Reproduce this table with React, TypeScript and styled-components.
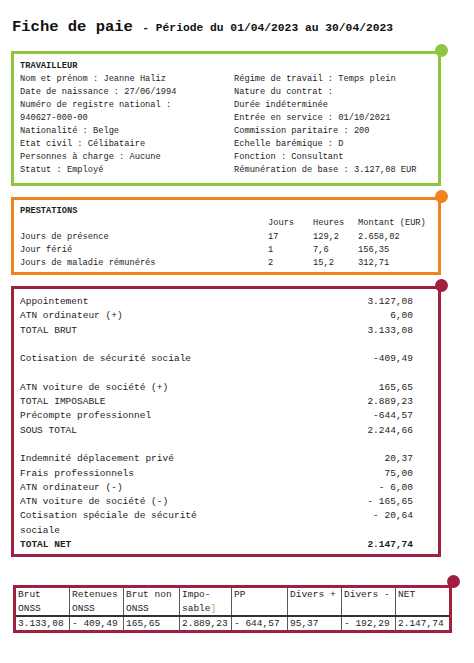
import React from "react";
import styled, { createGlobalStyle } from "styled-components";

const GREEN = "#8cc63f";
const ORANGE = "#f0831f";
const MAROON = "#a1203f";

const GlobalStyle = createGlobalStyle`
	body {
		margin: 0;
		background: #ffffff;
		color: #1d1d1d;
		font-family: "Liberation Mono", "DejaVu Sans Mono", monospace;
	}
`;

const travailleurLeft = [
	"Nom et prénom : Jeanne Haliz",
	"Date de naissance : 27/06/1994",
	"Numéro de registre national :",
	"940627-000-00",
	"Nationalité : Belge",
	"Etat civil : Célibataire",
	"Personnes à charge : Aucune",
	"Statut : Employé",
];

const travailleurRight = [
	"Régime de travail : Temps plein",
	"Nature du contrat :",
	"Durée indéterminée",
	"Entrée en service : 01/10/2021",
	"Commission paritaire : 200",
	"Echelle barémique : D",
	"Fonction : Consultant",
	"Rémunération de base : 3.127,08 EUR",
];

const prestations = [
	["Jours de présence", "17", "129,2", "2.658,02"],
	["Jour férié", "1", "7,6", "156,35"],
	["Jours de maladie rémunérés", "2", "15,2", "312,71"],
];

type Line = { label?: string; value?: string; bold?: boolean };

const calcul: Line[] = [
	{ label: "Appointement", value: "3.127,08" },
	{ label: "ATN ordinateur (+)", value: "6,00" },
	{ label: "TOTAL BRUT", value: "3.133,08" },
	{},
	{ label: "Cotisation de sécurité sociale", value: "-409,49" },
	{},
	{ label: "ATN voiture de société (+)", value: "165,65" },
	{ label: "TOTAL IMPOSABLE", value: "2.889,23" },
	{ label: "Précompte professionnel", value: "-644,57" },
	{ label: "SOUS TOTAL", value: "2.244,66" },
	{},
	{ label: "Indemnité déplacement privé", value: "20,37" },
	{ label: "Frais professionnels", value: "75,00" },
	{ label: "ATN ordinateur (-)", value: "- 6,00" },
	{ label: "ATN voiture de société (-)", value: "- 165,65" },
	{ label: "Cotisation spéciale de sécurité sociale", value: "- 20,64" },
	{ label: "TOTAL NET", value: "2.147,74", bold: true },
];

const recap = [
	{ head: ["Brut", "ONSS"], value: "3.133,08", width: 55 },
	{ head: ["Retenues", "ONSS"], value: "- 409,49", width: 54 },
	{ head: ["Brut non", "ONSS"], value: "165,65", width: 56 },
	{ head: ["Impo-", "sable"], value: "2.889,23", width: 52 },
	{ head: ["PP"], value: "- 644,57", width: 56 },
	{ head: ["Divers +"], value: "95,37", width: 54 },
	{ head: ["Divers -"], value: "- 192,29", width: 54 },
	{ head: ["NET"], value: "2.147,74", width: 55 },
];

const App = () => {
	return (
		<>
			<GlobalStyle />
			<Page>
				<Title>
					Fiche de paie <small>- Période du 01/04/2023 au 30/04/2023</small>
				</Title>

				<Box $color={GREEN} $pad="6px 6px 6px 6px">
					<Dot $color={GREEN} />
					<InfoGrid>
						<Heading>TRAVAILLEUR</Heading>
						<div>
							{travailleurLeft.map((l) => (
								<div key={l}>{l}</div>
							))}
						</div>
						<div>
							{travailleurRight.map((l) => (
								<div key={l}>{l}</div>
							))}
						</div>
					</InfoGrid>
				</Box>

				<Box $color={ORANGE} $pad="5px 6px 2px 6px">
					<Dot $color={ORANGE} />
					<Heading>PRESTATIONS</Heading>
					<PrestaGrid>
						<span />
						<span>Jours</span>
						<span>Heures</span>
						<span>Montant (EUR)</span>
						{prestations.map((row) =>
							row.map((c, i) => <span key={row[0] + i}>{c}</span>)
						)}
					</PrestaGrid>
				</Box>

				<Box $color={MAROON} $pad="6px 25px 2px 6px">
					<Dot $color={MAROON} />
					{calcul.map((l, i) =>
						l.label ? (
							<CalcRow key={i} $bold={l.bold}>
								<CalcLabel>{l.label}</CalcLabel>
								<span>{l.value}</span>
							</CalcRow>
						) : (
							<BlankRow key={i} />
						)
					)}
				</Box>

				<TableWrap>
					<Dot $color={MAROON} />
					<Recap>
						<colgroup>
							{recap.map((c) => (
								<col key={c.value} style={{ width: c.width }} />
							))}
						</colgroup>
						<thead>
							<tr>
								{recap.map((c) => (
									<th key={c.value}>
										{c.head.map((h, i) => (
											<div key={h}>
												{h}
												{h === "sable" && <Stray>]</Stray>}
											</div>
										))}
									</th>
								))}
							</tr>
						</thead>
						<tbody>
							<tr>
								{recap.map((c) => (
									<td key={c.value}>{c.value}</td>
								))}
							</tr>
						</tbody>
					</Recap>
				</TableWrap>
			</Page>
		</>
	);
};

export default App;

const Page = styled.div`
	width: 474px;
	padding: 17px 0 20px 11px;
	box-sizing: border-box;
`;

const Title = styled.h1`
	margin: 0 0 13px 1px;
	font-size: 15.5px;
	line-height: 20px;
	font-weight: 700;
	color: #111;

	small {
		font-size: 11.3px;
		font-weight: 700;
	}
`;

const Box = styled.section<{ $color: string; $pad: string }>`
	position: relative;
	width: 430px;
	box-sizing: border-box;
	border: 3px solid ${(p) => p.$color};
	padding: ${(p) => p.$pad};
	margin-bottom: 11px;
	font-size: 8.7px;
	line-height: 13px;
`;

const Dot = styled.span<{ $color: string }>`
	position: absolute;
	top: -10px;
	right: -10px;
	width: 13px;
	height: 13px;
	border-radius: 50%;
	background: ${(p) => p.$color};
`;

const Heading = styled.div`
	grid-column: 1 / -1;
	font-weight: 700;
`;

const InfoGrid = styled.div`
	display: grid;
	grid-template-columns: 214px 1fr;
`;

const PrestaGrid = styled.div`
	display: grid;
	grid-template-columns: 248px 45px 45px auto;
	margin-top: -1px;

	span:nth-child(-n + 4) {
		margin-bottom: 1px;
	}
`;

const CalcRow = styled.div<{ $bold?: boolean }>`
	display: flex;
	justify-content: space-between;
	align-items: flex-start;
	font-size: 9.5px;
	line-height: 14.3px;
	font-weight: ${(p) => (p.$bold ? 700 : 400)};
`;

const CalcLabel = styled.span`
	max-width: 196px;
`;

const BlankRow = styled.div`
	height: 14.3px;
`;

const TableWrap = styled.div`
	position: relative;
	width: 437px;
	margin-top: 28px;
	margin-left: 2px;
`;

const Recap = styled.table`
	width: 437px;
	table-layout: fixed;
	border-collapse: collapse;
	border: 3px solid ${MAROON};
	font-size: 9.5px;
	line-height: 13.5px;

	th,
	td {
		border-left: 1px solid #5a5a5a;
		padding: 0 0 0 2px;
		text-align: left;
		vertical-align: top;
		white-space: nowrap;
		overflow: hidden;
	}

	th {
		font-weight: 400;
		height: 27px;
		border-bottom: 2px solid #333;
	}

	td {
		line-height: 13px;
	}
`;

const Stray = styled.span`
	color: ${GREEN};
`;
